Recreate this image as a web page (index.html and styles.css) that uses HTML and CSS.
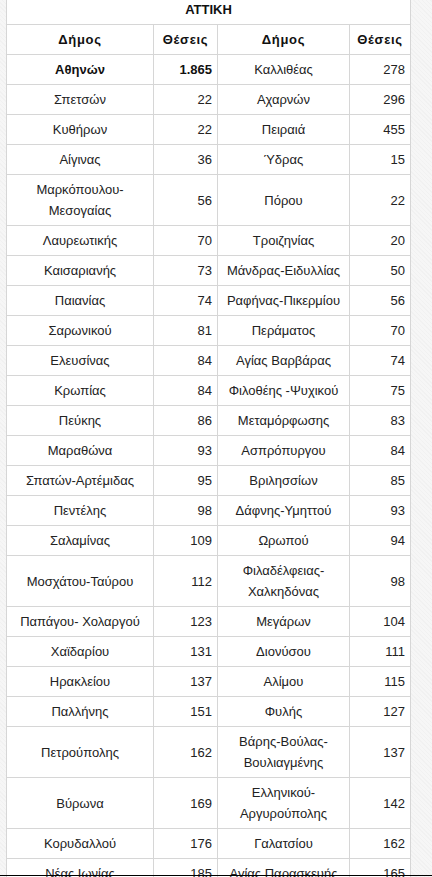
FILE: index.html
```html
<!DOCTYPE html>
<html lang="el">
<head>
<meta charset="utf-8">
<title>ΑΤΤΙΚΗ</title>
<link rel="stylesheet" href="styles.css">
</head>
<body>
<div class="page">
<table class="seats">
<colgroup><col class="c-name1"><col class="c-num1"><col class="c-name2"><col class="c-num2"></colgroup>
<thead>
<tr><th class="title" colspan="4">ΑΤΤΙΚΗ</th></tr>
<tr><th class="head">Δήμος</th><th class="head">Θέσεις</th><th class="head">Δήμος</th><th class="head">Θέσεις</th></tr>
</thead>
<tbody>
<tr><td class="name strong">Αθηνών</td><td class="num strong">1.865</td><td class="name">Καλλιθέας</td><td class="num">278</td></tr>
<tr><td class="name">Σπετσών</td><td class="num">22</td><td class="name">Αχαρνών</td><td class="num">296</td></tr>
<tr><td class="name">Κυθήρων</td><td class="num">22</td><td class="name">Πειραιά</td><td class="num">455</td></tr>
<tr><td class="name">Αίγινας</td><td class="num">36</td><td class="name">Ύδρας</td><td class="num">15</td></tr>
<tr><td class="name">Μαρκόπουλου-Μεσογαίας</td><td class="num">56</td><td class="name">Πόρου</td><td class="num">22</td></tr>
<tr><td class="name">Λαυρεωτικής</td><td class="num">70</td><td class="name">Τροιζηνίας</td><td class="num">20</td></tr>
<tr><td class="name">Καισαριανής</td><td class="num">73</td><td class="name">Μάνδρας-Ειδυλλίας</td><td class="num">50</td></tr>
<tr><td class="name">Παιανίας</td><td class="num">74</td><td class="name">Ραφήνας-Πικερμίου</td><td class="num">56</td></tr>
<tr><td class="name">Σαρωνικού</td><td class="num">81</td><td class="name">Περάματος</td><td class="num">70</td></tr>
<tr><td class="name">Ελευσίνας</td><td class="num">84</td><td class="name">Αγίας Βαρβάρας</td><td class="num">74</td></tr>
<tr><td class="name">Κρωπίας</td><td class="num">84</td><td class="name">Φιλοθέης -Ψυχικού</td><td class="num">75</td></tr>
<tr><td class="name">Πεύκης</td><td class="num">86</td><td class="name">Μεταμόρφωσης</td><td class="num">83</td></tr>
<tr><td class="name">Μαραθώνα</td><td class="num">93</td><td class="name">Ασπρόπυργου</td><td class="num">84</td></tr>
<tr><td class="name">Σπατών-Αρτέμιδας</td><td class="num">95</td><td class="name">Βριλησσίων</td><td class="num">85</td></tr>
<tr><td class="name">Πεντέλης</td><td class="num">98</td><td class="name">Δάφνης-Υμηττού</td><td class="num">93</td></tr>
<tr><td class="name">Σαλαμίνας</td><td class="num">109</td><td class="name">Ωρωπού</td><td class="num">94</td></tr>
<tr><td class="name">Μοσχάτου-Ταύρου</td><td class="num">112</td><td class="name">Φιλαδέλφειας-Χαλκηδόνας</td><td class="num">98</td></tr>
<tr><td class="name">Παπάγου- Χολαργού</td><td class="num">123</td><td class="name">Μεγάρων</td><td class="num">104</td></tr>
<tr><td class="name">Χαϊδαρίου</td><td class="num">131</td><td class="name">Διονύσου</td><td class="num">111</td></tr>
<tr><td class="name">Ηρακλείου</td><td class="num">137</td><td class="name">Αλίμου</td><td class="num">115</td></tr>
<tr><td class="name">Παλλήνης</td><td class="num">151</td><td class="name">Φυλής</td><td class="num">127</td></tr>
<tr><td class="name">Πετρούπολης</td><td class="num">162</td><td class="name">Βάρης-Βούλας-Βουλιαγμένης</td><td class="num">137</td></tr>
<tr><td class="name">Βύρωνα</td><td class="num">169</td><td class="name">Ελληνικού-Αργυρούπολης</td><td class="num">142</td></tr>
<tr><td class="name">Κορυδαλλού</td><td class="num">176</td><td class="name">Γαλατσίου</td><td class="num">162</td></tr>
<tr><td class="name">Νέας Ιωνίας</td><td class="num">185</td><td class="name">Αγίας Παρασκευής</td><td class="num">165</td></tr>
</tbody>
</table>
</div>
<div class="edge"></div>
</body>
</html>
```

FILE: styles.css
```css
html, body {
  margin: 0;
  padding: 0;
}
body {
  background-color: #f6f6f6;
  background-image: repeating-linear-gradient(45deg, rgba(0,0,0,0.018) 0 1px, transparent 1px 3px);
  font-family: "Liberation Sans", Arial, sans-serif;
  font-size: 13px;
  color: #222;
  height: 877px;
  overflow: hidden;
}
.page {
  padding-left: 6px;
  margin-top: -6px;
}
.seats {
  border-collapse: collapse;
  table-layout: fixed;
  width: 404px;
  background: #fff;
}
.c-name1 { width: 147px; }
.c-num1 { width: 64px; }
.c-name2 { width: 132px; }
.c-num2 { width: 61px; }
.seats th, .seats td {
  border: 1px solid #d6d6d6;
  padding: 4px 5px;
  line-height: 21px;
}
.title {
  font-weight: bold;
  text-align: center;
  color: #111;
}
.head {
  font-weight: bold;
  text-align: center;
  letter-spacing: 0.7px;
  color: #111;
}
.name {
  text-align: center;
}
.num {
  text-align: right;
}
.strong {
  font-weight: bold;
  color: #111;
}
.edge {
  position: fixed;
  left: 0;
  right: 0;
  bottom: 1px;
  height: 1px;
  background: #000;
}
```
